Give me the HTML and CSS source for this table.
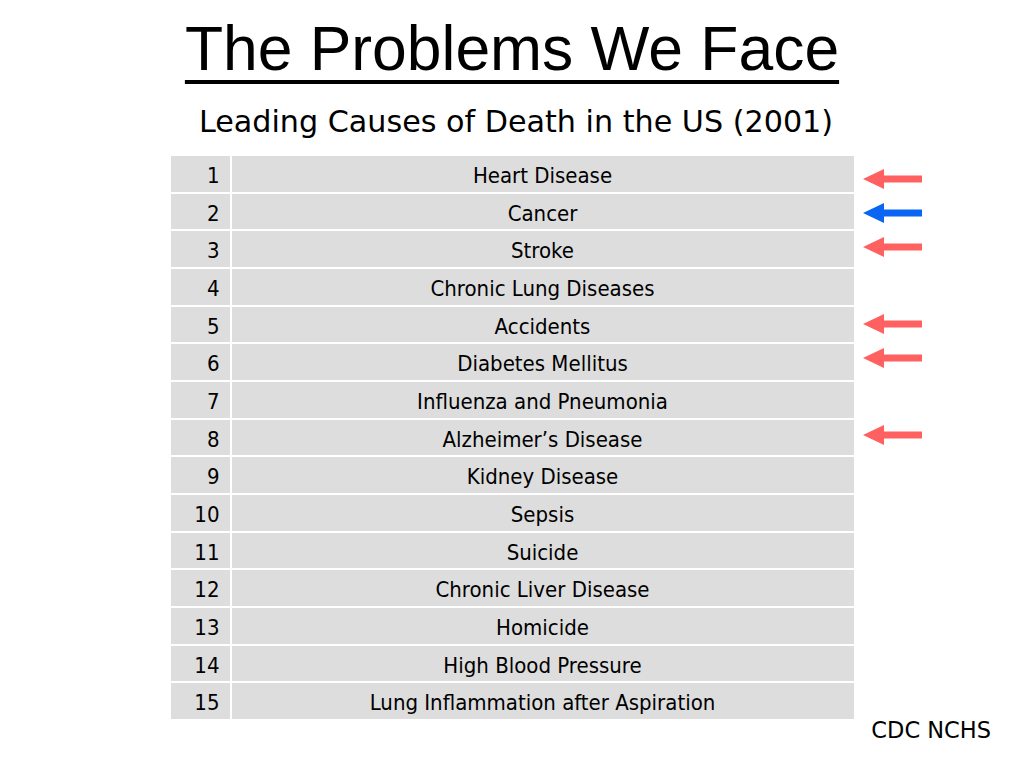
FILE: index.html
```html
<!DOCTYPE html>
<html lang="en">
<head>
<meta charset="utf-8">
<title>The Problems We Face</title>
<link rel="stylesheet" href="styles.css">
</head>
<body>
<div class="slide">
  <h1 class="title">The Problems We Face</h1>
  <h2 class="subtitle">Leading Causes of Death in the US (2001)</h2>
  <div class="table">
    <div class="num">1</div><div class="cause">Heart Disease</div>
    <div class="num">2</div><div class="cause">Cancer</div>
    <div class="num">3</div><div class="cause">Stroke</div>
    <div class="num">4</div><div class="cause">Chronic Lung Diseases</div>
    <div class="num">5</div><div class="cause">Accidents</div>
    <div class="num">6</div><div class="cause">Diabetes Mellitus</div>
    <div class="num">7</div><div class="cause">Influenza and Pneumonia</div>
    <div class="num">8</div><div class="cause">Alzheimer’s Disease</div>
    <div class="num">9</div><div class="cause">Kidney Disease</div>
    <div class="num">10</div><div class="cause">Sepsis</div>
    <div class="num">11</div><div class="cause">Suicide</div>
    <div class="num">12</div><div class="cause">Chronic Liver Disease</div>
    <div class="num">13</div><div class="cause">Homicide</div>
    <div class="num">14</div><div class="cause">High Blood Pressure</div>
    <div class="num">15</div><div class="cause">Lung Inflammation after Aspiration</div>
  </div>
  <div class="source">CDC NCHS</div>

  <svg class="arrow red a1" viewBox="0 0 60 20"><path d="M0 10 L21 0 L21 6.5 L59 6.5 L59 13.5 L21 13.5 L21 20 Z"/></svg>
  <svg class="arrow blue a2" viewBox="0 0 60 20"><path d="M0 10 L21 0 L21 6.5 L59 6.5 L59 13.5 L21 13.5 L21 20 Z"/></svg>
  <svg class="arrow red a3" viewBox="0 0 60 20"><path d="M0 10 L21 0 L21 6.5 L59 6.5 L59 13.5 L21 13.5 L21 20 Z"/></svg>
  <svg class="arrow red a5" viewBox="0 0 60 20"><path d="M0 10 L21 0 L21 6.5 L59 6.5 L59 13.5 L21 13.5 L21 20 Z"/></svg>
  <svg class="arrow red a6" viewBox="0 0 60 20"><path d="M0 10 L21 0 L21 6.5 L59 6.5 L59 13.5 L21 13.5 L21 20 Z"/></svg>
  <svg class="arrow red a8" viewBox="0 0 60 20"><path d="M0 10 L21 0 L21 6.5 L59 6.5 L59 13.5 L21 13.5 L21 20 Z"/></svg>
</div>
</body>
</html>
```

FILE: styles.css
```css
html, body {
  margin: 0;
  padding: 0;
  background: #ffffff;
}

.slide {
  position: relative;
  width: 1024px;
  height: 768px;
  overflow: hidden;
  display: flex;
  flex-direction: column;
  align-items: center;
  color: #000000;
  font-family: "DejaVu Sans Condensed", "DejaVu Sans", sans-serif;
}

.title {
  margin: 17px 0 0 0;
  font-family: "Liberation Sans", Arial, sans-serif;
  font-weight: normal;
  font-size: 62.4px;
  line-height: 63px;
  text-decoration: underline;
  text-decoration-thickness: 4px;
  text-underline-offset: 10px;
}

.subtitle {
  margin: 24px 0 0 8px;
  font-family: "DejaVu Sans", sans-serif;
  font-weight: normal;
  font-size: 30.2px;
  line-height: 36px;
}

.table {
  margin-top: 16px;
  display: grid;
  grid-template-columns: 59px 622px;
  grid-auto-rows: 35.67px;
  gap: 2px;
  font-size: 22px;
}

.num,
.cause {
  background: #dddddd;
  line-height: 30px;
  padding-top: 5px;
}

.num {
  text-align: right;
  padding-right: 10px;
}

.cause {
  text-align: center;
}

.source {
  align-self: flex-end;
  margin: 1px 33px 0 0;
  font-family: "DejaVu Sans", sans-serif;
  font-size: 22.5px;
  line-height: 20px;
}

.arrow {
  position: absolute;
  left: 863px;
  width: 60px;
  height: 20px;
}

.arrow.red { fill: #ff6161; }
.arrow.blue { fill: #0a66f2; }

.a1 { top: 169px; }
.a2 { top: 203px; }
.a3 { top: 237px; }
.a5 { top: 314px; }
.a6 { top: 348px; }
.a8 { top: 425px; }
```
